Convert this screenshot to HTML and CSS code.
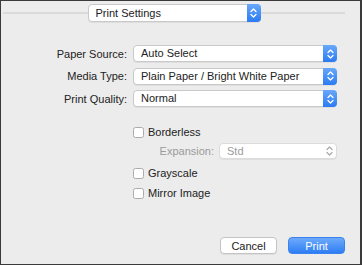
FILE: index.html
```html
<!DOCTYPE html>
<html>
<head>
<meta charset="utf-8">
<link rel="stylesheet" href="styles.css">
</head>
<body>
<div class="frame">
  <div class="header">
    <div class="rule"></div>
    <div class="popup popup-top">
      <span class="popup-text">Print Settings</span>
      <span class="stepper"><svg width="7" height="10" viewBox="0 0 7 10"><path d="M1 3.5 L3.5 1 L6 3.5 M1 6.5 L3.5 9 L6 6.5" fill="none" stroke="#fff" stroke-width="1.3" stroke-linecap="round" stroke-linejoin="round"/></svg></span>
    </div>
    <div class="rule"></div>
  </div>

  <div class="form">
    <div class="label">Paper Source:</div>
    <div class="popup">
      <span class="popup-text">Auto Select</span>
      <span class="stepper"><svg width="7" height="10" viewBox="0 0 7 10"><path d="M1 3.5 L3.5 1 L6 3.5 M1 6.5 L3.5 9 L6 6.5" fill="none" stroke="#fff" stroke-width="1.3" stroke-linecap="round" stroke-linejoin="round"/></svg></span>
    </div>
    <div class="label">Media Type:</div>
    <div class="popup">
      <span class="popup-text">Plain Paper / Bright White Paper</span>
      <span class="stepper"><svg width="7" height="10" viewBox="0 0 7 10"><path d="M1 3.5 L3.5 1 L6 3.5 M1 6.5 L3.5 9 L6 6.5" fill="none" stroke="#fff" stroke-width="1.3" stroke-linecap="round" stroke-linejoin="round"/></svg></span>
    </div>
    <div class="label">Print Quality:</div>
    <div class="popup">
      <span class="popup-text">Normal</span>
      <span class="stepper"><svg width="7" height="10" viewBox="0 0 7 10"><path d="M1 3.5 L3.5 1 L6 3.5 M1 6.5 L3.5 9 L6 6.5" fill="none" stroke="#fff" stroke-width="1.3" stroke-linecap="round" stroke-linejoin="round"/></svg></span>
    </div>
  </div>

  <div class="options">
    <div class="check-row"><span class="box"></span><span>Borderless</span></div>
    <div class="expansion-row">
      <span class="exp-label">Expansion:</span>
      <div class="popup popup-disabled">
        <span class="popup-text">Std</span>
        <span class="stepper-off"><svg width="7" height="10" viewBox="0 0 7 10"><path d="M1 3.5 L3.5 1 L6 3.5 M1 6.5 L3.5 9 L6 6.5" fill="none" stroke="#a8a8a8" stroke-width="1.2" stroke-linecap="round" stroke-linejoin="round"/></svg></span>
      </div>
    </div>
    <div class="check-row row-gray"><span class="box"></span><span>Grayscale</span></div>
    <div class="check-row row-mirror"><span class="box"></span><span>Mirror Image</span></div>
  </div>

  <div class="footer">
    <button class="btn btn-cancel">Cancel</button>
    <button class="btn btn-print">Print</button>
  </div>
</div>
</body>
</html>
```

FILE: styles.css
```css
html, body {
  margin: 0;
  padding: 0;
}
body {
  font-family: "Liberation Sans", Arial, sans-serif;
  font-size: 11px;
  color: #222;
}
.frame {
  box-sizing: border-box;
  width: 362px;
  height: 265px;
  background: #ececec;
  border: 1px solid #3a3a3a;
  border-right-width: 2px;
  display: flex;
  flex-direction: column;
}
.header {
  display: flex;
  align-items: center;
  padding: 3px 15px 0 2px;
}
.rule {
  flex: 1;
  height: 2px;
  background: #dadada;
}
.popup {
  box-sizing: border-box;
  display: flex;
  align-items: stretch;
  height: 17px;
  background: #fff;
  border: 1px solid #c9c9c9;
  border-radius: 4px;
  box-shadow: 0 1px 0 rgba(0,0,0,0.06);
}
.popup-top {
  width: 173px;
  height: 18px;
}
.popup-text {
  flex: 1;
  padding-left: 7px;
  line-height: 15px;
  white-space: nowrap;
  overflow: hidden;
}
.popup-top .popup-text {
  line-height: 16px;
}
.stepper {
  width: 14px;
  margin: -1px -1px -1px 0;
  border-radius: 0 4px 4px 0;
  background: linear-gradient(#69a8fb, #2b7bf2);
  display: flex;
  align-items: center;
  justify-content: center;
}
.stepper-off {
  width: 14px;
  display: flex;
  align-items: center;
  justify-content: center;
}
.form {
  display: grid;
  grid-template-columns: 126px 204px;
  column-gap: 6px;
  row-gap: 5.5px;
  margin-top: 23px;
  align-items: center;
}
.label {
  text-align: right;
  white-space: nowrap;
}
.options {
  display: flex;
  flex-direction: column;
  margin-top: 17px;
  padding-left: 132px;
}
.check-row {
  display: flex;
  align-items: center;
  gap: 4px;
  height: 16px;
}
.box {
  box-sizing: border-box;
  width: 11px;
  height: 11px;
  background: #fff;
  border: 1px solid #ababab;
  border-radius: 2.5px;
}
.expansion-row {
  display: flex;
  align-items: center;
  gap: 5px;
  margin-top: 3px;
  height: 16px;
}
.exp-label {
  width: 81px;
  text-align: right;
  color: #9b9b9b;
}
.popup-disabled {
  width: 118px;
  height: 16px;
  color: #9b9b9b;
  border-color: #dcdcdc;
}
.popup-disabled .popup-text {
  line-height: 14px;
}
.row-gray {
  margin-top: 6px;
}
.row-mirror {
  margin-top: 4px;
}
.footer {
  margin-top: auto;
  display: flex;
  justify-content: flex-end;
  gap: 11px;
  padding: 0 15px 10px 0;
}
.btn {
  box-sizing: border-box;
  width: 57px;
  height: 17px;
  padding: 0;
  font-family: "Liberation Sans", Arial, sans-serif;
  font-size: 11px;
  border-radius: 4px;
}
.btn-cancel {
  background: #fff;
  color: #222;
  border: 1px solid #c4c4c4;
  box-shadow: 0 1px 0 rgba(0,0,0,0.06);
}
.btn-print {
  background: linear-gradient(#6eaafb, #2d7ef4);
  color: #fff;
  border: 1px solid #3b82ee;
}
```
